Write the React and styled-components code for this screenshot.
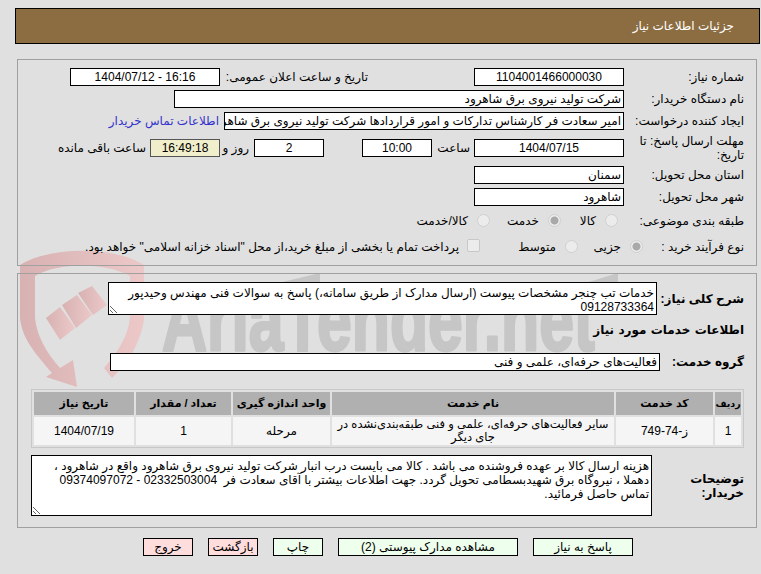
import React from 'react';
import styled, { createGlobalStyle } from 'styled-components';

const Global = createGlobalStyle`
  html, body { margin: 0; padding: 0; }
  body {
    background: #e0e0e0;
    color: #000;
    font-family: "Liberation Sans", "DejaVu Sans", sans-serif;
    font-size: 12px;
  }
`;

const Page = styled.div`
  position: relative;
  direction: rtl;
  width: 761px;
  height: 574px;
  padding-top: 8px;
  box-sizing: border-box;
  overflow: hidden;
`;

const Watermark = styled.svg`
  position: absolute;
  left: 0;
  top: 240px;
  width: 660px;
  height: 160px;
`;

const Header = styled.div`
  position: relative;
  height: 36px;
  margin: 0 1px 15px 15px;
  box-sizing: border-box;
  background: #8c6d42;
  border: 1px solid #000;
  color: #fff;
  line-height: 34px;
  padding-right: 25px;
`;

const Panel = styled.div`
  position: relative;
  margin: ${p => p.$mt || 0}px 4px 0 0;
  width: 740px;
  box-sizing: border-box;
  border: 1px solid #a0a0a0;
  padding: 8px 12px 0 0;
  height: ${p => p.$h}px;
`;

const Row = styled.div`
  display: flex;
  align-items: center;
  min-height: ${p => p.$h || 18}px;
  margin-bottom: ${p => p.$mb ?? 4}px;
`;

const Label = styled.div`
  flex: none;
  width: ${p => p.$w || 120}px;
  font-weight: ${p => (p.$bold ? 'bold' : 'normal')};
  line-height: 14px;
`;

const Field = styled.div`
  flex: none;
  width: ${p => p.$w || 150}px;
  height: 18px;
  box-sizing: border-box;
  padding: 0 2px;
  border: 1px solid ${p => (p.$tint ? '#555' : '#000')};
  background: ${p => (p.$tint ? '#f0eecb' : '#fff')};
  line-height: 16px;
  text-align: ${p => (p.$center ? 'center' : 'right')};
  white-space: nowrap;
  overflow: hidden;
`;

const Text = styled.span`
  flex: none;
  width: ${p => (p.$w ? `${p.$w}px` : 'auto')};
  margin-right: ${p => p.$mr || 0}px;
  white-space: nowrap;
`;

const ContactLink = styled.a`
  margin-right: 5px;
  color: #3333cc;
  white-space: nowrap;
  text-decoration: none;
`;

const Option = styled.label`
  flex: none;
  display: flex;
  align-items: center;
  width: ${p => (p.$w ? `${p.$w}px` : 'auto')};
  white-space: nowrap;
`;

const Radio = styled.input.attrs({ type: 'radio', disabled: true })`
  appearance: none;
  flex: none;
  width: 13px;
  height: 13px;
  margin: 0 0 2px 9px;
  border: 1px solid #d0d0d0;
  border-radius: 50%;
  background: ${p => (p.defaultChecked ? 'radial-gradient(circle, #a9a9a9 0 3.5px, #ececec 4.5px)' : '#ececec')};
`;

const Check = styled.input.attrs({ type: 'checkbox', disabled: true })`
  appearance: none;
  flex: none;
  width: 13px;
  height: 13px;
  margin: 0 0 3px 8px;
  border: 1px solid #c8c8c8;
  border-radius: 2px;
  background: #ececec;
`;

const Area = styled.textarea`
  flex: none;
  display: block;
  width: ${p => p.$w}px;
  height: ${p => p.$h}px;
  box-sizing: border-box;
  margin: 0;
  padding: 3px 2px;
  border: 1px solid #000;
  border-radius: 0;
  outline: none;
  background: #fff;
  color: #000;
  font: inherit;
  line-height: 14px;
  overflow: hidden;
`;

const Heading = styled.div`
  font-weight: bold;
  height: 16px;
  line-height: 16px;
  margin-bottom: 15px;
  word-spacing: 1px;
`;

const Table = styled.table`
  width: 713px;
  table-layout: fixed;
  border: 1px solid #c8c8c8;
  border-spacing: 2px;
  margin: 18px 0 7px 0;
  font-size: 12px;
`;

const Th = styled.th`
  background: #b0b0b0;
  height: 23px;
  padding: 0;
  width: ${p => p.$w}px;
  font-size: ${p => p.$size || 11}px;
  white-space: nowrap;
`;

const Td = styled.td`
  background: #f5f5f5;
  height: 28px;
  padding: 0 2px;
  text-align: center;
  line-height: 13px;
`;

const NameCell = styled(Td)`
  font-size: 11.5px;
  white-space: nowrap;
`;

const Actions = styled.div`
  display: flex;
  gap: 15px;
  margin: 10px 128px 0 0;
`;

const Action = styled.button`
  flex: none;
  width: ${p => p.$w}px;
  height: 18px;
  padding: 0;
  border: 1px solid #000;
  border-radius: 0;
  background: ${p => (p.$danger ? '#ffdddd' : '#eeffee')};
  color: #000;
  font: inherit;
  line-height: 16px;
`;

function LogoMark() {
  return (
    <Watermark viewBox="0 0 660 160">
      <defs>
        <linearGradient id="shield" x1="0" x2="1" y1="0" y2="0">
          <stop offset="0" stopColor="#d8b2b2" />
          <stop offset="1" stopColor="#ecc8c8" />
        </linearGradient>
      </defs>
      <g fill="url(#shield)">
        <path d="M20 25 C50 6 115 6 144 25 L144 80 C140 105 128 122 112 138 L104 128 C118 112 128 96 130 78 L130 36 C105 22 58 22 35 36 L35 78 C37 96 46 112 60 128 L73 120 L77 147 L46 137 L52 133 C34 112 22 98 20 78 Z" />
        <path d="M46 78 L60 67 L75 88 L60 100 Z" />
        <path d="M62 65 L77 55 L92 75 L76 88 Z" />
        <path d="M78 53 L92 46 L107 65 L93 75 Z" />
      </g>
      <g fill="#c6c6c6">
        <text
          transform="translate(162 110) scale(0.71 1)"
          fontFamily="'Liberation Sans', sans-serif"
          fontWeight="bold"
          fontSize="88"
          stroke="#c6c6c6"
          strokeWidth="3"
          strokeLinejoin="round"
          style={{ direction: 'ltr' }}
        >
          AriaTender.net
        </text>
        <path d="M232 54 L320 33 L320 44 L232 64 Z" />
        <path d="M556 52 L618 33 L618 43 L556 62 Z" />
      </g>
    </Watermark>
  );
}

export default function App() {
  return (
    <Page>
      <Global />
      <LogoMark />
      <Header>جزئیات اطلاعات نیاز</Header>

      <Panel $h={207}>
        <Row>
          <Label>شماره نیاز:</Label>
          <Field $center>1104001466000030</Field>
          <Text $w={148} $mr={106}>تاریخ و ساعت اعلان عمومی:</Text>
          <Field $center dir="ltr">1404/07/12 - 16:16</Field>
        </Row>
        <Row>
          <Label>نام دستگاه خریدار:</Label>
          <Field $w={450}>شرکت تولید نیروی برق شاهرود</Field>
        </Row>
        <Row>
          <Label>ایجاد کننده درخواست:</Label>
          <Field $w={400}>امیر سعادت فر کارشناس تدارکات و امور قراردادها شرکت تولید نیروی برق شاهرود</Field>
          <ContactLink href="#">اطلاعات تماس خریدار</ContactLink>
        </Row>
        <Row $h={28}>
          <Label>مهلت ارسال پاسخ: تا تاریخ:</Label>
          <Field $center>1404/07/15</Field>
          <Text $w={38} $mr={4}>ساعت</Text>
          <Field $w={70} $center>10:00</Field>
          <Text $w={38} />
          <Field $w={70} $center>2</Field>
          <Text $w={29} $mr={5}>روز و</Text>
          <Field $w={70} $tint $center>16:49:18</Field>
          <Text $mr={4}>ساعت باقی مانده</Text>
        </Row>
        <Row>
          <Label>استان محل تحویل:</Label>
          <Field>سمنان</Field>
        </Row>
        <Row>
          <Label>شهر محل تحویل:</Label>
          <Field>شاهرود</Field>
        </Row>
        <Row $h={22}>
          <Label $w={126}>طبقه بندی موضوعی:</Label>
          <Option $w={57}><Radio />کالا</Option>
          <Option $w={71}><Radio defaultChecked />خدمت</Option>
          <Option><Radio />کالا/خدمت</Option>
        </Row>
        <Row $h={22}>
          <Label $w={101}>نوع فرآیند خرید :</Label>
          <Option $w={65}><Radio defaultChecked />جزیی</Option>
          <Option $w={98}><Radio />متوسط</Option>
          <Option><Check />پرداخت تمام یا بخشی از مبلغ خرید،از محل "اسناد خزانه اسلامی" خواهد بود.</Option>
        </Row>
      </Panel>

      <Panel $mt={7} $h={255}>
        <Row $h={33} $mb={7}>
          <Label $w={87} $bold>شرح کلی نیاز:</Label>
          <Area
            $w={549}
            $h={33}
            readOnly
            defaultValue="خدمات تب چنجر مشخصات پیوست (ارسال مدارک از طریق سامانه،) پاسخ به سوالات فنی مهندس وحیدپور 09128733364"
          />
        </Row>
        <Heading>اطلاعات خدمات مورد نیاز</Heading>
        <Row $mb={0}>
          <Label $w={84} $bold>گروه خدمت:</Label>
          <Field $w={550}>فعالیت‌های حرفه‌ای، علمی و فنی</Field>
        </Row>
        <Table>
          <thead>
            <tr>
              <Th $w={26} $size={9.5}>ردیف</Th>
              <Th $w={97}>کد خدمت</Th>
              <Th $w={282}>نام خدمت</Th>
              <Th $w={97}>واحد اندازه گیری</Th>
              <Th $w={95}>تعداد / مقدار</Th>
              <Th>تاریخ نیاز</Th>
            </tr>
          </thead>
          <tbody>
            <tr>
              <Td>1</Td>
              <Td>ز-74-749</Td>
              <NameCell>سایر فعالیت‌های حرفه‌ای، علمی و فنی طبقه‌بندی‌نشده در<br />جای دیگر</NameCell>
              <Td>مرحله</Td>
              <Td>1</Td>
              <Td>1404/07/19</Td>
            </tr>
          </tbody>
        </Table>
        <Row $mb={0}>
          <Label $w={92} $bold>توضیحات خریدار:</Label>
          <Area
            $w={621}
            $h={61}
            readOnly
            defaultValue="هزینه ارسال کالا بر عهده فروشنده می باشد . کالا می بایست درب انبار شرکت تولید نیروی برق شاهرود واقع در شاهرود ، دهملا ، نیروگاه برق شهیدبسطامی تحویل گردد. جهت اطلاعات بیشتر با آقای سعادت فر  02332503004 - 09374097072 تماس حاصل فرمائید."
          />
        </Row>
      </Panel>

      <Actions>
        <Action $w={100}>پاسخ به نیاز</Action>
        <Action $w={180}>مشاهده مدارک پیوستی (2)</Action>
        <Action $w={50}>چاپ</Action>
        <Action $w={50} $danger>بازگشت</Action>
        <Action $w={50} $danger>خروج</Action>
      </Actions>
    </Page>
  );
}
